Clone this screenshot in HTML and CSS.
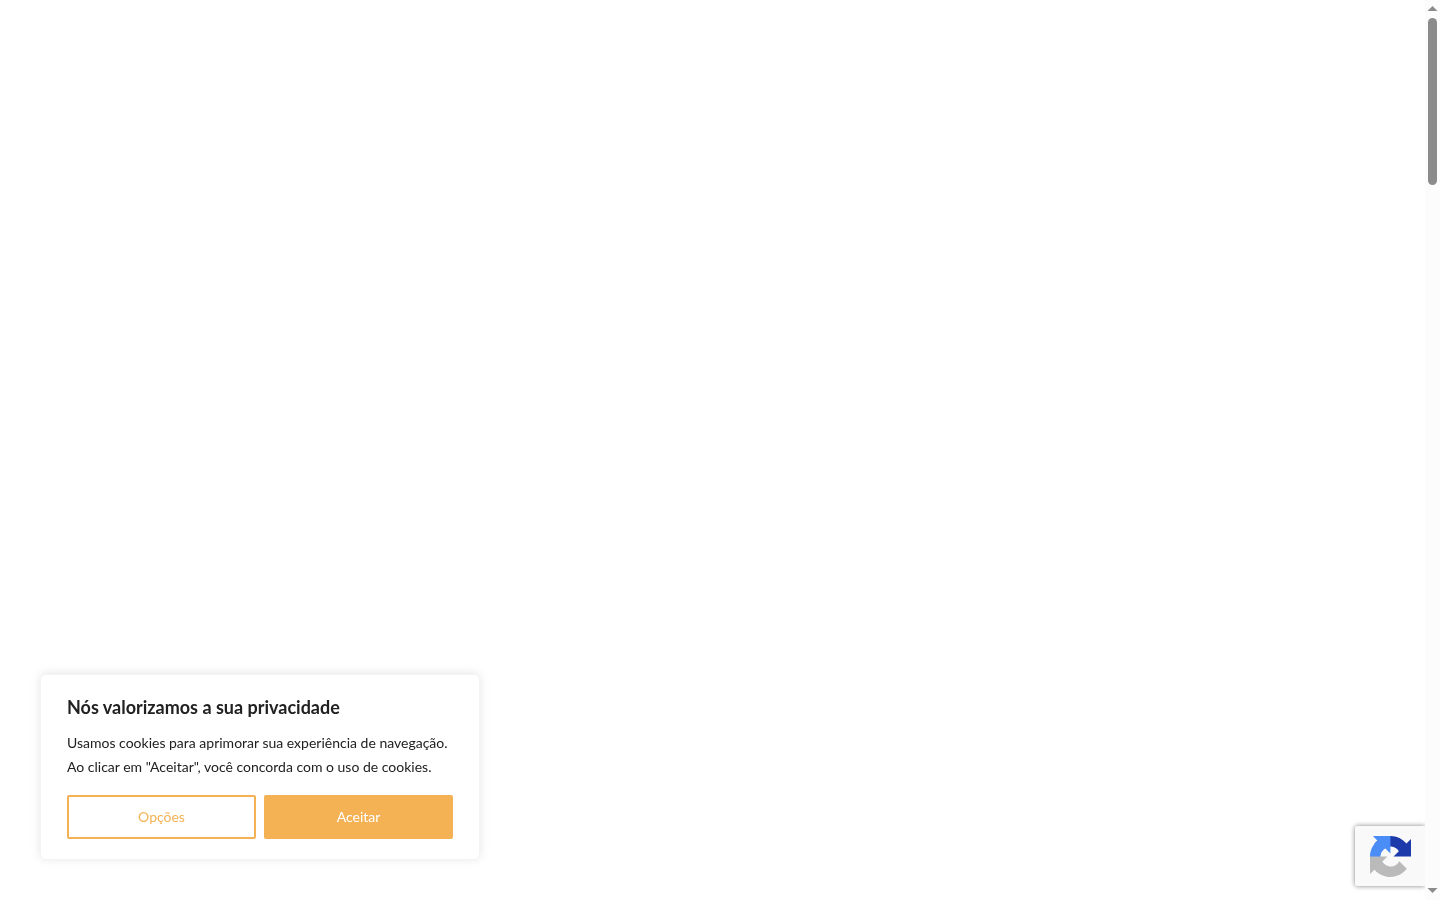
FILE: index.html
```html
<!DOCTYPE html>
<html lang="pt-BR">
<head>
  <meta charset="UTF-8">
  <meta name="viewport" content="width=device-width, initial-scale=1.0">
  <title>Privacidade</title>
  <link rel="stylesheet" href="styles.css">
</head>
<body>
  <main class="pagina"></main>

  <div class="barra-rolagem" aria-hidden="true">
    <svg class="seta" viewBox="0 0 15 18"><path d="M2.500 11 L7.500 6 L12.500 11Z"/></svg>
    <div class="trilho"><div class="polegar"></div></div>
    <svg class="seta" viewBox="0 0 15 18"><path d="M2.500 6 L7.500 11 L12.500 6Z"/></svg>
  </div>

  <section class="aviso-cookies" aria-labelledby="aviso-titulo">
    <h2 id="aviso-titulo">Nós valorizamos a sua privacidade</h2>
    <p>Usamos cookies para aprimorar sua experiência de navegação. Ao clicar em "Aceitar", você concorda com o uso de cookies.</p>
    <div class="aviso-botoes">
      <button type="button" class="botao botao-opcoes">Opções</button>
      <button type="button" class="botao botao-aceitar">Aceitar</button>
    </div>
  </section>

  <div class="selo-recaptcha">
    <svg class="logo" viewBox="0 0 64 64" role="img" aria-label="reCAPTCHA">
      <path fill="#1c3aa9" d="M64 31.955l-.033-1.37V4.687l-7.16 7.16C50.948 4.674 42.033.093 32.05.093c-10.4 0-19.622 4.96-25.458 12.64l11.736 11.86a15.55 15.55 0 0 1 4.754-5.334c2.05-1.6 4.952-2.906 8.968-2.906.485 0 .86.057 1.135.163 4.976.393 9.288 3.14 11.828 7.124l-8.307 8.307L64 31.953"/>
      <path fill="#4a8df6" d="M31.862.094l-1.37.033H4.594l7.16 7.16C4.58 13.147 0 22.06 0 32.046c0 10.4 4.96 19.622 12.64 25.458L24.5 45.768a15.55 15.55 0 0 1-5.334-4.754c-1.6-2.05-2.906-4.952-2.906-8.968 0-.485.057-.86.163-1.135.393-4.976 3.14-9.288 7.124-11.828l8.307 8.307L31.86.095"/>
      <path fill="#bababa" d="M.001 32.045l.033 1.37v25.898l7.16-7.16c5.86 7.173 14.774 11.754 24.76 11.754 10.4 0 19.622-4.96 25.458-12.64l-11.736-11.86a15.55 15.55 0 0 1-4.754 5.334c-2.05 1.6-4.952 2.906-8.968 2.906-.485 0-.86-.057-1.135-.163-4.976-.393-9.288-3.14-11.828-7.124l8.307-8.307c-10.522.04-22.4.066-27.295-.005"/>
    </svg>
  </div>
</body>
</html>
```
FILE: styles.css
```css
* {
  box-sizing: border-box;
}

body {
  margin: 0;
  min-height: 100vh;
  display: flex;
  background: #fff;
  color: #212121;
  font-family: Lato, sans-serif;
}

.pagina {
  flex: 1;
}

/* barra de rolagem */
.barra-rolagem {
  position: sticky;
  top: 0;
  z-index: 2;
  display: flex;
  flex-direction: column;
  width: 15px;
  height: 100vh;
  background: #fcfcfc;
}

.seta {
  display: block;
  width: 15px;
  height: 18px;
  fill: #8b8b8b;
}

.trilho {
  flex: 1;
  padding: 0 3px;
}

.polegar {
  height: 167px;
  border-radius: 5px;
  background: #8b8b8b;
}

/* aviso de cookies */
.aviso-cookies {
  position: fixed;
  left: 40px;
  bottom: 40px;
  width: 440px;
  max-width: calc(100% - 80px);
  padding: 20px 26px;
  border: 1px solid #f4f4f4;
  border-radius: 6px;
  background: #fff;
  box-shadow: 0 -1px 10px rgba(172, 171, 171, 0.3);
}

.aviso-cookies h2 {
  margin: 0 0 12px;
  font-size: 18px;
  line-height: 24px;
  font-weight: 700;
}

.aviso-cookies p {
  margin: 0 0 16px;
  font-size: 14px;
  line-height: 24px;
}

.aviso-botoes {
  display: flex;
  gap: 8px;
}

.botao {
  flex: 1;
  padding: 8px 27px;
  border: 2px solid #f4b254;
  border-radius: 2px;
  font-family: inherit;
  font-size: 14px;
  line-height: 24px;
  cursor: pointer;
}

.botao-opcoes {
  background: transparent;
  color: #f4b254;
}

.botao-aceitar {
  background: #f4b254;
  color: #fff;
}

/* selo do reCAPTCHA */
.selo-recaptcha {
  position: fixed;
  right: 15px;
  bottom: 14px;
  display: flex;
  align-items: center;
  width: 70px;
  height: 60px;
  padding: 1px 0 0 15px;
  border-radius: 2px 0 0 2px;
  background: #f9f9f9;
  box-shadow: 0 0 5px gray;
}

.logo {
  width: 41px;
  height: 41px;
}
```
